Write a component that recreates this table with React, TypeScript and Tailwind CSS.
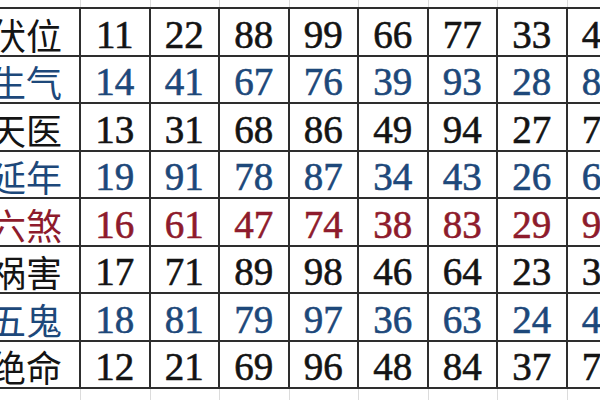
const rows: { name: string; nums: string[]; tone: "black" | "blue" | "red" }[] = [
  { name: "伏位", nums: ["11", "22", "88", "99", "66", "77", "33", "44"], tone: "black" },
  { name: "生气", nums: ["14", "41", "67", "76", "39", "93", "28", "82"], tone: "blue" },
  { name: "天医", nums: ["13", "31", "68", "86", "49", "94", "27", "72"], tone: "black" },
  { name: "延年", nums: ["19", "91", "78", "87", "34", "43", "26", "62"], tone: "blue" },
  { name: "六煞", nums: ["16", "61", "47", "74", "38", "83", "29", "92"], tone: "red" },
  { name: "祸害", nums: ["17", "71", "89", "98", "46", "64", "23", "32"], tone: "black" },
  { name: "五鬼", nums: ["18", "81", "79", "97", "36", "63", "24", "42"], tone: "blue" },
  { name: "绝命", nums: ["12", "21", "69", "96", "48", "84", "37", "73"], tone: "black" },
];

const toneClass = {
  black: "text-[#141414]",
  blue: "text-[#1d487a]",
  red: "text-[#8e1b2c]",
};

// faint cut-off rows above and below the table
const FaintStrip = ({ height }: { height: string }) => (
  <div className={`grid grid-cols-[109px_repeat(8,69.5px)] ${height}`}>
    {Array.from({ length: 9 }).map((_, i) => (
      <div key={i} className="border-r border-[#dcdcdc]" />
    ))}
  </div>
);

export default function App() {
  return (
    <div className="w-[600px] h-[400px] overflow-hidden bg-white">
      <div className="ml-[-28px] w-[720px]">
        <FaintStrip height="h-[7px]" />
        <div className="border-t-2 border-[#2e2e2e]">
          {rows.map((row) => (
            <div
              key={row.name}
              className={`grid grid-cols-[109px_repeat(8,69.5px)] h-[47.5px] border-b-2 border-[#2e2e2e] ${toneClass[row.tone]}`}
            >
              <div className="flex items-center justify-end pr-[17px] pt-[4px] border-r-2 border-[#2e2e2e] text-[36px] leading-none font-['Noto_Sans_CJK_SC',sans-serif]">
                {row.name}
              </div>
              {row.nums.map((n, i) => (
                <div
                  key={i}
                  className="flex items-center justify-center pt-[5px] border-r-2 border-[#2e2e2e] text-[39px] leading-none font-['Liberation_Serif',serif] [-webkit-text-stroke:0.6px_currentColor]"
                >
                  {n}
                </div>
              ))}
            </div>
          ))}
        </div>
        <FaintStrip height="h-[12px]" />
      </div>
    </div>
  );
}
